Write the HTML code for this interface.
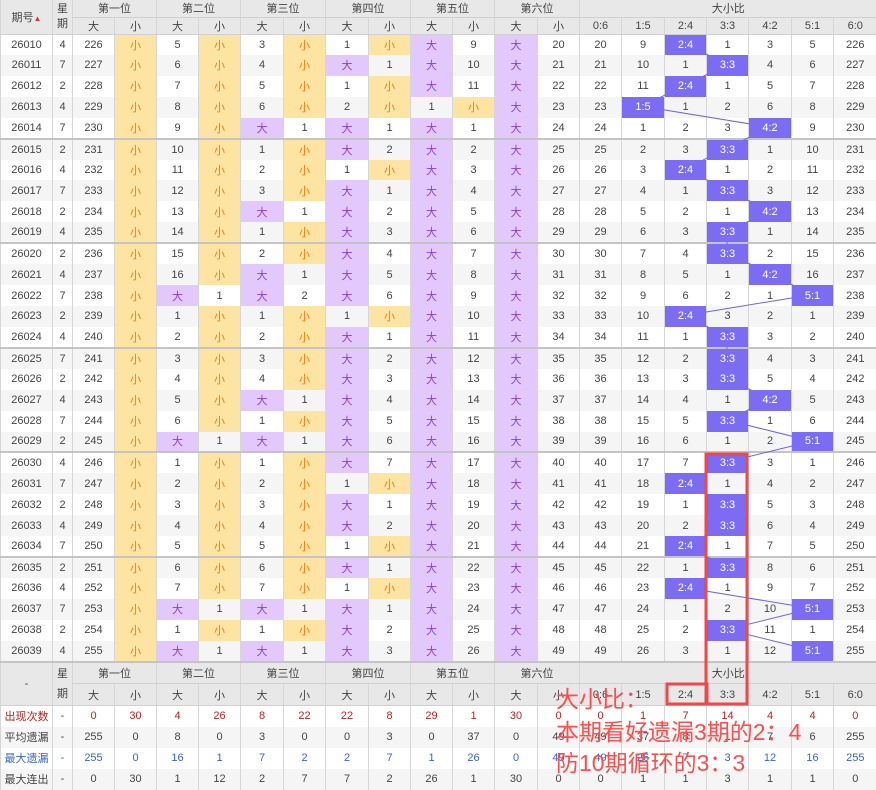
<!DOCTYPE html>
<html><head><meta charset="utf-8">
<style>
*{margin:0;padding:0;box-sizing:border-box}
body{width:876px;height:789px;overflow:hidden;background:#fff;font-family:"Liberation Sans","Noto Sans CJK SC",sans-serif;font-size:11px;color:#444;position:relative}
table{border-collapse:collapse;table-layout:fixed;width:876px;position:absolute;left:0;top:0}
td,th{text-align:center;border-left:1px solid #d6d6d6;font-weight:normal;padding:0;white-space:nowrap;overflow:hidden}
th{background:#e8e8e8;color:#444;border-bottom:1px solid #d0d0d0}
.hd1 th{height:17px}.hd2 th{height:16px}
tbody tr{height:20.93px}
tbody tr:nth-child(even){background:#f5f5f5}
tr.g td{border-bottom:2px solid #c4c4c4}
.s{background:#fee4a2;color:#f77c12}
.b{background:#e2c8fc;color:#8a3fd0}
.h{background:#7b6cf3;color:#fff;position:relative;z-index:2}
.f1 th{height:22px}.f2 th{height:22px}
.st td{height:21px}
.st:nth-child(even) td{background:#f5f5f5}
.r1 td{color:#b22}.r1 td:first-child{color:#b22}
.r3 td{color:#3a63c8}
.note{position:absolute;left:556px;color:#ff4d4d;font-size:23px;line-height:30px;font-family:"Liberation Sans","Noto Sans CJK SC",sans-serif;z-index:4}
</style></head><body>
<table>
<colgroup><col style="width:52px"><col style="width:20px"><col style="width:42px"><col style="width:42px"><col style="width:42px"><col style="width:42px"><col style="width:43px"><col style="width:42px"><col style="width:43px"><col style="width:42px"><col style="width:42px"><col style="width:42px"><col style="width:43px"><col style="width:42px"><col style="width:42px"><col style="width:43px"><col style="width:42px"><col style="width:42px"><col style="width:43px"><col style="width:42px"><col style="width:43px"></colgroup>
<thead>
<tr class="hd1"><th rowspan="2">期号<span style="color:#d33;font-size:8px">▲</span></th><th rowspan="2" style="line-height:15px">星<br>期</th><th colspan="2">第一位</th><th colspan="2">第二位</th><th colspan="2">第三位</th><th colspan="2">第四位</th><th colspan="2">第五位</th><th colspan="2">第六位</th><th colspan="7">大小比</th></tr>
<tr class="hd2"><th>大</th><th>小</th><th>大</th><th>小</th><th>大</th><th>小</th><th>大</th><th>小</th><th>大</th><th>小</th><th>大</th><th>小</th><th>0:6</th><th>1:5</th><th>2:4</th><th>3:3</th><th>4:2</th><th>5:1</th><th>6:0</th></tr>
</thead>
<tbody>
<tr><td>26010</td><td>4</td><td>226</td><td class="s">小</td><td>5</td><td class="s">小</td><td>3</td><td class="s">小</td><td>1</td><td class="s">小</td><td class="b">大</td><td>9</td><td class="b">大</td><td>20</td><td>20</td><td>9</td><td class="h">2:4</td><td>1</td><td>3</td><td>5</td><td>226</td></tr>
<tr><td>26011</td><td>7</td><td>227</td><td class="s">小</td><td>6</td><td class="s">小</td><td>4</td><td class="s">小</td><td class="b">大</td><td>1</td><td class="b">大</td><td>10</td><td class="b">大</td><td>21</td><td>21</td><td>10</td><td>1</td><td class="h">3:3</td><td>4</td><td>6</td><td>227</td></tr>
<tr><td>26012</td><td>2</td><td>228</td><td class="s">小</td><td>7</td><td class="s">小</td><td>5</td><td class="s">小</td><td>1</td><td class="s">小</td><td class="b">大</td><td>11</td><td class="b">大</td><td>22</td><td>22</td><td>11</td><td class="h">2:4</td><td>1</td><td>5</td><td>7</td><td>228</td></tr>
<tr><td>26013</td><td>4</td><td>229</td><td class="s">小</td><td>8</td><td class="s">小</td><td>6</td><td class="s">小</td><td>2</td><td class="s">小</td><td>1</td><td class="s">小</td><td class="b">大</td><td>23</td><td>23</td><td class="h">1:5</td><td>1</td><td>2</td><td>6</td><td>8</td><td>229</td></tr>
<tr class="g"><td>26014</td><td>7</td><td>230</td><td class="s">小</td><td>9</td><td class="s">小</td><td class="b">大</td><td>1</td><td class="b">大</td><td>1</td><td class="b">大</td><td>1</td><td class="b">大</td><td>24</td><td>24</td><td>1</td><td>2</td><td>3</td><td class="h">4:2</td><td>9</td><td>230</td></tr>
<tr><td>26015</td><td>2</td><td>231</td><td class="s">小</td><td>10</td><td class="s">小</td><td>1</td><td class="s">小</td><td class="b">大</td><td>2</td><td class="b">大</td><td>2</td><td class="b">大</td><td>25</td><td>25</td><td>2</td><td>3</td><td class="h">3:3</td><td>1</td><td>10</td><td>231</td></tr>
<tr><td>26016</td><td>4</td><td>232</td><td class="s">小</td><td>11</td><td class="s">小</td><td>2</td><td class="s">小</td><td>1</td><td class="s">小</td><td class="b">大</td><td>3</td><td class="b">大</td><td>26</td><td>26</td><td>3</td><td class="h">2:4</td><td>1</td><td>2</td><td>11</td><td>232</td></tr>
<tr><td>26017</td><td>7</td><td>233</td><td class="s">小</td><td>12</td><td class="s">小</td><td>3</td><td class="s">小</td><td class="b">大</td><td>1</td><td class="b">大</td><td>4</td><td class="b">大</td><td>27</td><td>27</td><td>4</td><td>1</td><td class="h">3:3</td><td>3</td><td>12</td><td>233</td></tr>
<tr><td>26018</td><td>2</td><td>234</td><td class="s">小</td><td>13</td><td class="s">小</td><td class="b">大</td><td>1</td><td class="b">大</td><td>2</td><td class="b">大</td><td>5</td><td class="b">大</td><td>28</td><td>28</td><td>5</td><td>2</td><td>1</td><td class="h">4:2</td><td>13</td><td>234</td></tr>
<tr class="g"><td>26019</td><td>4</td><td>235</td><td class="s">小</td><td>14</td><td class="s">小</td><td>1</td><td class="s">小</td><td class="b">大</td><td>3</td><td class="b">大</td><td>6</td><td class="b">大</td><td>29</td><td>29</td><td>6</td><td>3</td><td class="h">3:3</td><td>1</td><td>14</td><td>235</td></tr>
<tr><td>26020</td><td>2</td><td>236</td><td class="s">小</td><td>15</td><td class="s">小</td><td>2</td><td class="s">小</td><td class="b">大</td><td>4</td><td class="b">大</td><td>7</td><td class="b">大</td><td>30</td><td>30</td><td>7</td><td>4</td><td class="h">3:3</td><td>2</td><td>15</td><td>236</td></tr>
<tr><td>26021</td><td>4</td><td>237</td><td class="s">小</td><td>16</td><td class="s">小</td><td class="b">大</td><td>1</td><td class="b">大</td><td>5</td><td class="b">大</td><td>8</td><td class="b">大</td><td>31</td><td>31</td><td>8</td><td>5</td><td>1</td><td class="h">4:2</td><td>16</td><td>237</td></tr>
<tr><td>26022</td><td>7</td><td>238</td><td class="s">小</td><td class="b">大</td><td>1</td><td class="b">大</td><td>2</td><td class="b">大</td><td>6</td><td class="b">大</td><td>9</td><td class="b">大</td><td>32</td><td>32</td><td>9</td><td>6</td><td>2</td><td>1</td><td class="h">5:1</td><td>238</td></tr>
<tr><td>26023</td><td>2</td><td>239</td><td class="s">小</td><td>1</td><td class="s">小</td><td>1</td><td class="s">小</td><td>1</td><td class="s">小</td><td class="b">大</td><td>10</td><td class="b">大</td><td>33</td><td>33</td><td>10</td><td class="h">2:4</td><td>3</td><td>2</td><td>1</td><td>239</td></tr>
<tr class="g"><td>26024</td><td>4</td><td>240</td><td class="s">小</td><td>2</td><td class="s">小</td><td>2</td><td class="s">小</td><td class="b">大</td><td>1</td><td class="b">大</td><td>11</td><td class="b">大</td><td>34</td><td>34</td><td>11</td><td>1</td><td class="h">3:3</td><td>3</td><td>2</td><td>240</td></tr>
<tr><td>26025</td><td>7</td><td>241</td><td class="s">小</td><td>3</td><td class="s">小</td><td>3</td><td class="s">小</td><td class="b">大</td><td>2</td><td class="b">大</td><td>12</td><td class="b">大</td><td>35</td><td>35</td><td>12</td><td>2</td><td class="h">3:3</td><td>4</td><td>3</td><td>241</td></tr>
<tr><td>26026</td><td>2</td><td>242</td><td class="s">小</td><td>4</td><td class="s">小</td><td>4</td><td class="s">小</td><td class="b">大</td><td>3</td><td class="b">大</td><td>13</td><td class="b">大</td><td>36</td><td>36</td><td>13</td><td>3</td><td class="h">3:3</td><td>5</td><td>4</td><td>242</td></tr>
<tr><td>26027</td><td>4</td><td>243</td><td class="s">小</td><td>5</td><td class="s">小</td><td class="b">大</td><td>1</td><td class="b">大</td><td>4</td><td class="b">大</td><td>14</td><td class="b">大</td><td>37</td><td>37</td><td>14</td><td>4</td><td>1</td><td class="h">4:2</td><td>5</td><td>243</td></tr>
<tr><td>26028</td><td>7</td><td>244</td><td class="s">小</td><td>6</td><td class="s">小</td><td>1</td><td class="s">小</td><td class="b">大</td><td>5</td><td class="b">大</td><td>15</td><td class="b">大</td><td>38</td><td>38</td><td>15</td><td>5</td><td class="h">3:3</td><td>1</td><td>6</td><td>244</td></tr>
<tr class="g"><td>26029</td><td>2</td><td>245</td><td class="s">小</td><td class="b">大</td><td>1</td><td class="b">大</td><td>1</td><td class="b">大</td><td>6</td><td class="b">大</td><td>16</td><td class="b">大</td><td>39</td><td>39</td><td>16</td><td>6</td><td>1</td><td>2</td><td class="h">5:1</td><td>245</td></tr>
<tr><td>26030</td><td>4</td><td>246</td><td class="s">小</td><td>1</td><td class="s">小</td><td>1</td><td class="s">小</td><td class="b">大</td><td>7</td><td class="b">大</td><td>17</td><td class="b">大</td><td>40</td><td>40</td><td>17</td><td>7</td><td class="h">3:3</td><td>3</td><td>1</td><td>246</td></tr>
<tr><td>26031</td><td>7</td><td>247</td><td class="s">小</td><td>2</td><td class="s">小</td><td>2</td><td class="s">小</td><td>1</td><td class="s">小</td><td class="b">大</td><td>18</td><td class="b">大</td><td>41</td><td>41</td><td>18</td><td class="h">2:4</td><td>1</td><td>4</td><td>2</td><td>247</td></tr>
<tr><td>26032</td><td>2</td><td>248</td><td class="s">小</td><td>3</td><td class="s">小</td><td>3</td><td class="s">小</td><td class="b">大</td><td>1</td><td class="b">大</td><td>19</td><td class="b">大</td><td>42</td><td>42</td><td>19</td><td>1</td><td class="h">3:3</td><td>5</td><td>3</td><td>248</td></tr>
<tr><td>26033</td><td>4</td><td>249</td><td class="s">小</td><td>4</td><td class="s">小</td><td>4</td><td class="s">小</td><td class="b">大</td><td>2</td><td class="b">大</td><td>20</td><td class="b">大</td><td>43</td><td>43</td><td>20</td><td>2</td><td class="h">3:3</td><td>6</td><td>4</td><td>249</td></tr>
<tr class="g"><td>26034</td><td>7</td><td>250</td><td class="s">小</td><td>5</td><td class="s">小</td><td>5</td><td class="s">小</td><td>1</td><td class="s">小</td><td class="b">大</td><td>21</td><td class="b">大</td><td>44</td><td>44</td><td>21</td><td class="h">2:4</td><td>1</td><td>7</td><td>5</td><td>250</td></tr>
<tr><td>26035</td><td>2</td><td>251</td><td class="s">小</td><td>6</td><td class="s">小</td><td>6</td><td class="s">小</td><td class="b">大</td><td>1</td><td class="b">大</td><td>22</td><td class="b">大</td><td>45</td><td>45</td><td>22</td><td>1</td><td class="h">3:3</td><td>8</td><td>6</td><td>251</td></tr>
<tr><td>26036</td><td>4</td><td>252</td><td class="s">小</td><td>7</td><td class="s">小</td><td>7</td><td class="s">小</td><td>1</td><td class="s">小</td><td class="b">大</td><td>23</td><td class="b">大</td><td>46</td><td>46</td><td>23</td><td class="h">2:4</td><td>1</td><td>9</td><td>7</td><td>252</td></tr>
<tr><td>26037</td><td>7</td><td>253</td><td class="s">小</td><td class="b">大</td><td>1</td><td class="b">大</td><td>1</td><td class="b">大</td><td>1</td><td class="b">大</td><td>24</td><td class="b">大</td><td>47</td><td>47</td><td>24</td><td>1</td><td>2</td><td>10</td><td class="h">5:1</td><td>253</td></tr>
<tr><td>26038</td><td>2</td><td>254</td><td class="s">小</td><td>1</td><td class="s">小</td><td>1</td><td class="s">小</td><td class="b">大</td><td>2</td><td class="b">大</td><td>25</td><td class="b">大</td><td>48</td><td>48</td><td>25</td><td>2</td><td class="h">3:3</td><td>11</td><td>1</td><td>254</td></tr>
<tr class="g"><td>26039</td><td>4</td><td>255</td><td class="s">小</td><td class="b">大</td><td>1</td><td class="b">大</td><td>1</td><td class="b">大</td><td>3</td><td class="b">大</td><td>26</td><td class="b">大</td><td>49</td><td>49</td><td>26</td><td>3</td><td>1</td><td>12</td><td class="h">5:1</td><td>255</td></tr>
</tbody>
<tbody class="foot">
<tr class="f1"><th rowspan="2">-</th><th rowspan="2" style="line-height:20px">星<br>期</th><th colspan="2">第一位</th><th colspan="2">第二位</th><th colspan="2">第三位</th><th colspan="2">第四位</th><th colspan="2">第五位</th><th colspan="2">第六位</th><th colspan="7">大小比</th></tr>
<tr class="f2"><th>大</th><th>小</th><th>大</th><th>小</th><th>大</th><th>小</th><th>大</th><th>小</th><th>大</th><th>小</th><th>大</th><th>小</th><th>0:6</th><th>1:5</th><th>2:4</th><th>3:3</th><th>4:2</th><th>5:1</th><th>6:0</th></tr>
<tr class="st r1"><td>出现次数</td><td>-</td><td>0</td><td>30</td><td>4</td><td>26</td><td>8</td><td>22</td><td>22</td><td>8</td><td>29</td><td>1</td><td>30</td><td>0</td><td>0</td><td>1</td><td>7</td><td>14</td><td>4</td><td>4</td><td>0</td></tr>
<tr class="st"><td>平均遗漏</td><td>-</td><td>255</td><td>0</td><td>8</td><td>0</td><td>3</td><td>0</td><td>0</td><td>3</td><td>0</td><td>37</td><td>0</td><td>49</td><td>49</td><td>37</td><td>8</td><td>1</td><td>7</td><td>6</td><td>255</td></tr>
<tr class="st r3"><td>最大遗漏</td><td>-</td><td>255</td><td>0</td><td>16</td><td>1</td><td>7</td><td>2</td><td>2</td><td>7</td><td>1</td><td>26</td><td>0</td><td>49</td><td>49</td><td>26</td><td>7</td><td>3</td><td>12</td><td>16</td><td>255</td></tr>
<tr class="st"><td>最大连出</td><td>-</td><td>0</td><td>30</td><td>1</td><td>12</td><td>2</td><td>7</td><td>7</td><td>2</td><td>26</td><td>1</td><td>30</td><td>0</td><td>0</td><td>1</td><td>1</td><td>3</td><td>1</td><td>1</td><td>0</td></tr>
</tbody>
</table>
<svg width="876" height="789" style="position:absolute;left:0;top:0;pointer-events:none;z-index:1">
<polyline fill="none" stroke="#6f63e8" stroke-width="1" points="685,43.5 727,64.4 685,85.3 642,106.3 770,127.2 727,148.1 685,169.1 727,190 770,210.9 727,231.8 727,252.7 770,273.7 812,294.6 685,315.5 727,336.5 727,357.4 727,378.3 770,399.3 727,420.2 812,441.1 727,462 685,483 727,503.9 727,524.8 685,545.8 727,566.7 685,587.6 812,608.5 727,629.5 812,650.4"/>
</svg>
<svg width="876" height="789" style="position:absolute;left:0;top:0;pointer-events:none;z-index:3">
<rect x="706" y="454" width="41" height="250" fill="none" stroke="#f04848" stroke-width="3"/>
<rect x="667" y="684" width="40" height="20" fill="none" stroke="#f04848" stroke-width="3"/>
</svg>
<div class="note" style="top:684px">大小比：</div>
<div class="note" style="top:717px">本期看好遗漏3期的2：4</div>
<div class="note" style="top:748px">防10期循环的3：3</div>
</body></html>
